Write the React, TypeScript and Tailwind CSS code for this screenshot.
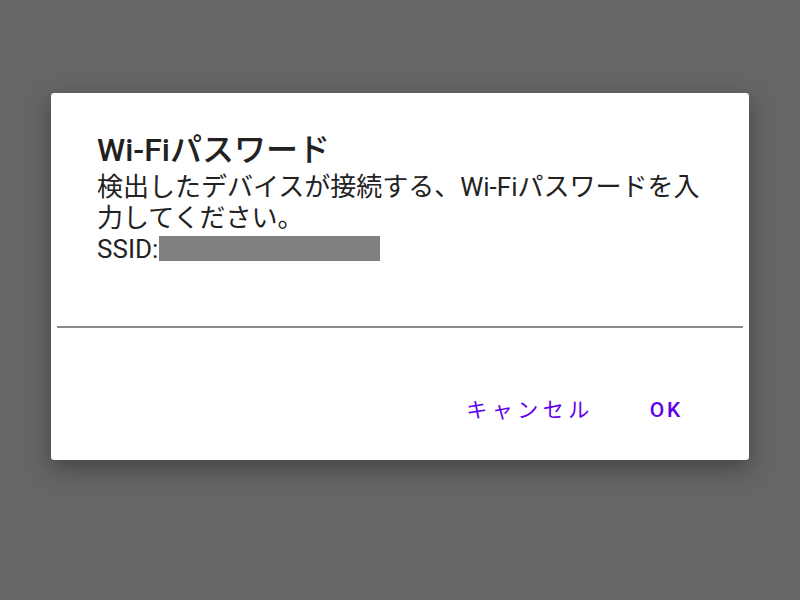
import React from 'react';

const jp = { fontFamily: 'Roboto, "Noto Sans CJK JP", sans-serif' };

export default function App() {
  return (
    <div className="w-[800px] h-[600px] bg-[#666666] pt-[93px] pl-[51px]" style={jp}>
      {/* Dialog */}
      <div className="w-[698px] bg-white rounded-[3px] shadow-[0_8px_24px_rgba(0,0,0,0.35)]">
        <div className="pl-[46px] pr-[46px] pt-[39px]">
          <h1 className="text-[32px] leading-[36px] font-medium text-[#212121]">Wi-Fiパスワード</h1>
          <p className="mt-[4px] text-[26px] leading-[31px] text-[#222222]">
            検出したデバイスが接続する、Wi-Fiパスワードを入力してください。
            <br />
            SSID:
            <span className="inline-block w-[221px] h-[25px] bg-[#808080] align-[-3px] ml-[1px]" />
          </p>
        </div>

        <div className="mt-[61px] mx-[6px] h-[2px] bg-[#8a8a8a]" />

        {/* Actions */}
        <div className="flex justify-end items-center gap-[56px] pt-[68px] pb-[36px] pr-[66px]">
          <button className="text-[21px] leading-[28px] tracking-[4.5px] text-[#6200ee]">キャンセル</button>
          <button className="text-[21px] leading-[28px] tracking-[2.8px] font-medium text-[#6200ee]">OK</button>
        </div>
      </div>
    </div>
  );
}
